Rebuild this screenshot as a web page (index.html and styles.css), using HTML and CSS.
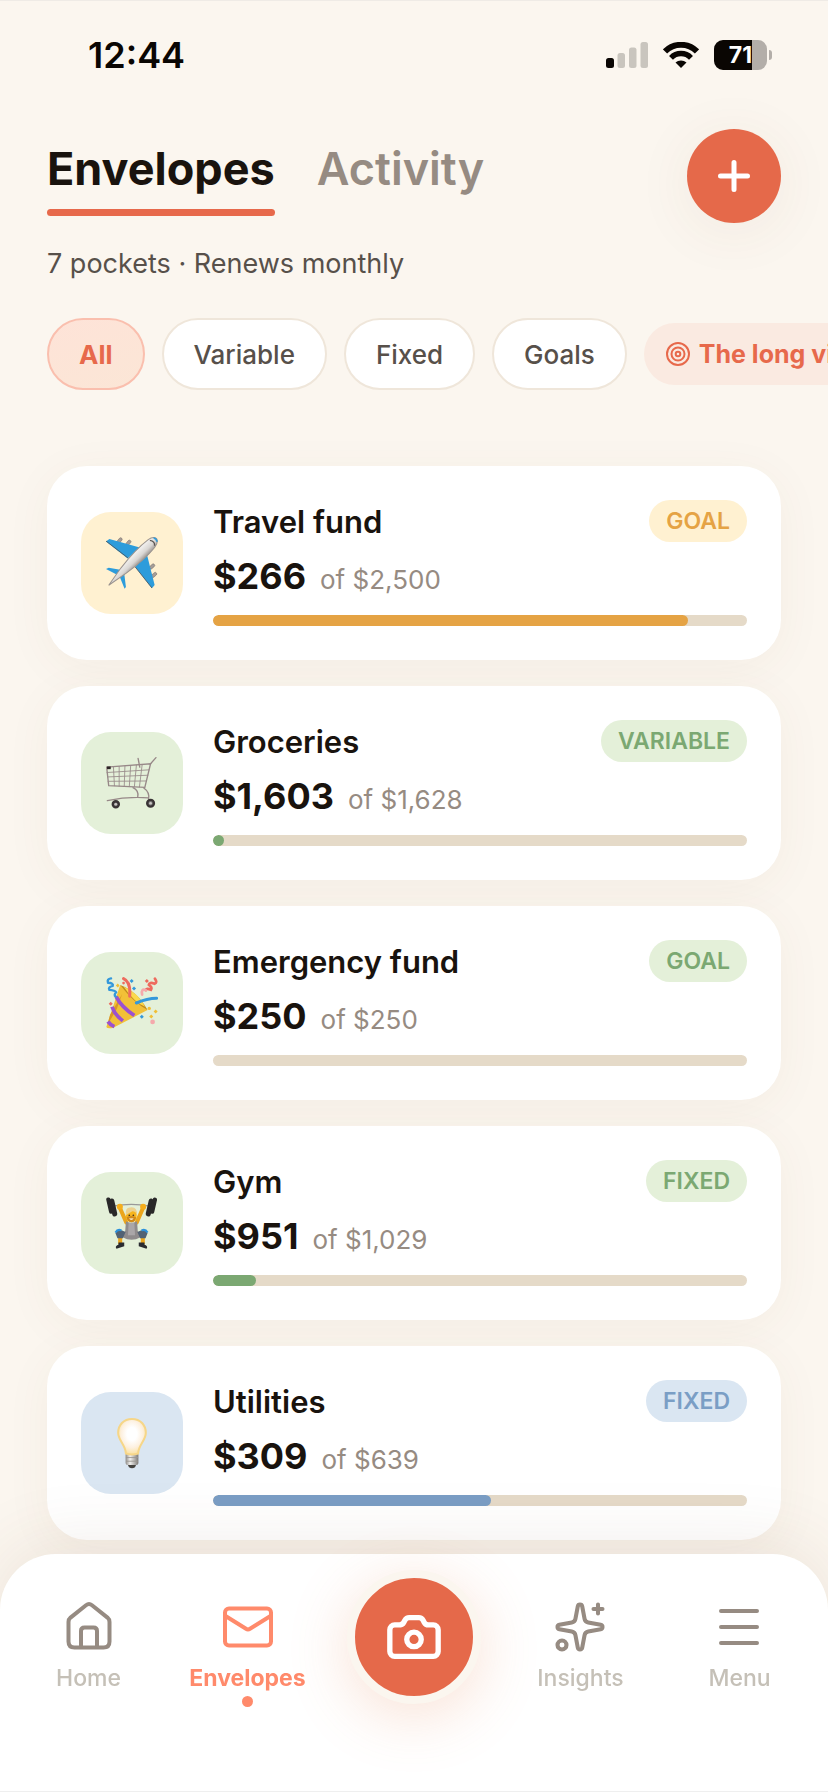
FILE: index.html
```
<!DOCTYPE html>
<html lang="en">
<head>
  <meta charset="UTF-8" />
  <meta name="viewport" content="width=device-width, initial-scale=1.0" />
  <title>Envelopes</title>
  <link rel="stylesheet" href="styles.css">
</head>
<body>
  <div class="status-bar">
    <span class="time">12:44</span>
    <div class="status-icons">
      <svg class="signal" viewBox="0 0 42 26" aria-hidden="true">
        <rect x="0" y="16" width="8" height="10" rx="2.5" fill="#0a0603"/>
        <rect x="11.500" y="11" width="7.500" height="15" rx="2.500" fill="#c9c5be"/>
        <rect x="23" y="5.500" width="7.500" height="20.500" rx="2.500" fill="#c9c5be"/>
        <rect x="34.500" y="0" width="7.500" height="26" rx="2.500" fill="#c9c5be"/>
      </svg>
      <svg class="wifi" viewBox="0 0 36 26" aria-hidden="true">
        <path d="M2 9.500 A22.500 22.500 0 0 1 34 9.500" fill="none" stroke="#0a0603" stroke-width="6"/>
        <path d="M8 15.800 A14 14 0 0 1 28 15.800" fill="none" stroke="#0a0603" stroke-width="5.500"/>
        <path d="M18 26 L12.500 20.600 A8 8 0 0 1 23.500 20.600 Z" fill="#0a0603"/>
      </svg>
      <span class="battery">71</span>
    </div>
  </div>

  <main class="page">
    <header class="top">
      <div class="tabs">
        <button class="tab active">Envelopes</button>
        <button class="tab">Activity</button>
      </div>
      <button class="add-btn" aria-label="Add envelope">
        <svg viewBox="0 0 32 32" aria-hidden="true"><path d="M16 2.500v27M2.500 16h27"/></svg>
      </button>
    </header>

    <p class="subtitle">7 pockets · Renews monthly</p>

    <div class="filters">
      <button class="chip selected">All</button>
      <button class="chip">Variable</button>
      <button class="chip">Fixed</button>
      <button class="chip">Goals</button>
      <button class="chip-link">
        <svg viewBox="0 0 24 24" aria-hidden="true">
          <circle cx="12" cy="12" r="11"/><circle cx="12" cy="12" r="6.500"/><circle cx="12" cy="12" r="2.300"/>
        </svg>
        The long view
      </button>
    </div>

    <section class="cards">
      <article class="card gold">
        <div class="tile">
          <svg viewBox="0 0 154 154" aria-hidden="true">
            <defs>
              <linearGradient id="hull" x1="0.300" y1="0.300" x2="0.700" y2="0.700">
                <stop offset="0.300" stop-color="#f4f3f1"/><stop offset="0.550" stop-color="#d9d6d3"/><stop offset="0.750" stop-color="#8f8884"/>
              </linearGradient>
            </defs>
            <g fill="#a59d98" stroke="#6f6864" stroke-width="1.500">
              <rect x="36" y="1" width="9" height="18" rx="4" transform="rotate(40 40 10)"/>
              <rect x="62" y="8" width="9" height="18" rx="4" transform="rotate(40 66 17)"/>
              <rect x="132" y="78" width="9" height="18" rx="4" transform="rotate(48 136 87)"/>
              <rect x="138" y="103" width="9" height="18" rx="4" transform="rotate(48 142 112)"/>
            </g>
            <path d="M0 13 10 6 100 31 64 64Z" fill="#2d9cdb"/>
            <path d="M0 12 65 62" stroke="#4b565e" stroke-width="2.500"/>
            <path d="M122 55 144 142 136 152 86 88Z" fill="#2d9cdb"/>
            <path d="M86 88 136 151" stroke="#4b565e" stroke-width="2.500"/>
            <path d="M0 95 8 91 42 97 33 112ZM40 116 54 108 59 148 55 153Z" fill="#2d9cdb"/>
            <path d="M8 143 44 92Q88 36 125 8 140-3 150 5 156 16 144 31 116 66 60 107Z" fill="url(#hull)" stroke="#9a938f" stroke-width="3"/>
            <path d="M130 10Q145 12 144 26" fill="none" stroke="#5c5653" stroke-width="4"/>
            <path d="M141 3Q150 5 151 14" fill="none" stroke="#2d9cdb" stroke-width="5"/>
          </svg>
        </div>
        <div class="info">
          <div class="row"><h2>Travel fund</h2><span class="badge">GOAL</span></div>
          <p class="amount"><strong>$266</strong> <span>of $2,500</span></p>
          <div class="bar"><div class="fill" style="width: 89%"></div></div>
        </div>
      </article>

      <article class="card green">
        <div class="tile">
          <svg viewBox="0 0 154 154" fill="none" stroke="#978888" stroke-width="3" stroke-linecap="round" aria-hidden="true">
            <path d="M2 30 132 20 115 90 8 85Z" stroke-width="4"/>
            <path d="M3 46 127 38M5 59 124 54M6 72 119 71" stroke-width="2.500"/>
            <path d="M22 29 25 85M39 28 39 86M56 27 54 87M73 26 69 88M90 24 84 89M107 23 99 89" stroke-width="2.500"/>
            <path d="M132 20 148 2M95 4 100 30" stroke-width="4"/>
            <path d="M80 91Q98 100 94 118M112 92Q130 105 126 124M4 129Q65 116 126 121" stroke-width="4"/>
            <path d="M3 32H14" stroke="#2b2525" stroke-width="8" stroke-linecap="butt"/>
            <g fill="#777" stroke="#393335" stroke-width="7"><circle cx="29" cy="140" r="9"/><circle cx="132" cy="137" r="10"/></g>
            <g fill="#cbc5c5" stroke="none"><circle cx="29" cy="140" r="4"/><circle cx="132" cy="137" r="4"/></g>
          </svg>
        </div>
        <div class="info">
          <div class="row"><h2>Groceries</h2><span class="badge">VARIABLE</span></div>
          <p class="amount"><strong>$1,603</strong> <span>of $1,628</span></p>
          <div class="bar"><div class="fill" style="width: 2%"></div></div>
        </div>
      </article>

      <article class="card green">
        <div class="tile">
          <svg viewBox="0 0 154 154" aria-hidden="true">
            <path d="M1 148Q3 154 20 151L123 98Q90 60 42 24Z" fill="#f2c037"/>
            <path d="M42 24Q92 42 123 98 82 76 42 24Z" fill="#c08a1e"/>
            <path d="M52 28Q94 46 116 88 84 76 52 28Z" fill="#fbd94b"/>
            <path d="M12 112 4 142 32 95 48 50Z" fill="#d99726"/>
            <g fill="none" stroke="#9b51d0" stroke-width="11">
              <path d="M30 58Q45 88 84 114M18 88Q24 110 50 130M6 132Q12 142 25 147"/>
            </g>
            <g fill="none" stroke-linecap="round">
              <path d="M15 4Q2 6 6 17 23 18 20 26 5 30 10 38 29 40 30 45 22 54 29 58" stroke="#3498db" stroke-width="7"/>
              <path d="M90 77Q122 63 150 63" stroke="#3498db" stroke-width="9"/>
              <path d="M52 5Q74 15 70 57" stroke="#ee6b5e" stroke-width="9"/>
              <path d="M145 5Q153 17 144 20 128 14 127 23 138 30 133 38 119 32 118 39" stroke="#ee6b5e" stroke-width="8"/>
              <path d="M118 39Q103 33 107 52" stroke="#f5a9ac" stroke-width="8"/>
            </g>
            <g fill="#f1bf35"><path d="m35 19 5 6-5 6-6-6ZM147 96l6 6-6 6-6-6ZM134 111l6 6-6 6-6-6Z"/><circle cx="128" cy="93" r="5"/></g>
            <g fill="#3498db"><path d="m76 6 6 6-6 6-6-6ZM83 28l6 6-6 6-6-6ZM106 112l6 6-6 6-6-6Z"/></g>
            <g fill="#ee6b5e"><path d="m121 6 6 6-6 6-6-6ZM14 73l6 6-6 6-6-6Z"/><circle cx="52" cy="18" r="4"/></g>
            <circle cx="138" cy="133" r="7" fill="#f5a9ac"/>
          </svg>
        </div>
        <div class="info">
          <div class="row"><h2>Emergency fund</h2><span class="badge">GOAL</span></div>
          <p class="amount"><strong>$250</strong> <span>of $250</span></p>
          <div class="bar"></div>
        </div>
      </article>

      <article class="card green">
        <div class="tile">
          <svg viewBox="0 0 154 154" aria-hidden="true">
            <path d="M20 27Q75 17 130 27" fill="none" stroke="#999" stroke-width="4"/>
            <g fill="#292829">
              <rect x="5" y="1" width="13" height="49" rx="6" transform="rotate(-13 11 26)"/>
              <rect x="14" y="4" width="15" height="54" rx="7" transform="rotate(-13 22 31)"/>
              <rect x="122" y="4" width="15" height="54" rx="7" transform="rotate(13 129 31)"/>
              <rect x="134" y="1" width="13" height="49" rx="6" transform="rotate(13 140 26)"/>
            </g>
            <g stroke="#eba51d" stroke-width="12" stroke-linecap="round" fill="none">
              <path d="M41 32 60 75M110 32 91 75"/>
            </g>
            <circle cx="41" cy="29" r="9" fill="#f5ae1c"/><circle cx="110" cy="29" r="9" fill="#f5ae1c"/>
            <path d="M59 72Q75 81 92 72L94 101 102 119Q76 134 49 119L57 100Z" fill="#8f8b8c"/>
            <path d="M67 77H84L86 113H65Z" fill="#aaa6a8"/>
            <path d="M59 52Q58 73 75 75 92 73 91 52 90 34 75 34 60 34 59 52Z" fill="#f6b51d"/>
            <path d="M59 54Q56 30 72 31 93 28 92 54 89 42 78 42 67 48 59 54Z" fill="#ecd18f"/>
            <path d="M61 60Q75 53 89 60 87 75 75 75 63 73 61 60Z" fill="#d18a1a"/>
            <path d="M68 64H82Q75 71 68 64Z" fill="#fff"/>
            <g fill="#493526"><circle cx="69" cy="54" r="2.500"/><circle cx="81" cy="54" r="2.500"/></g>
            <g stroke="#eba51d" stroke-width="12"><path d="M42 107V139M109 107V139"/></g>
            <path d="M28 107Q31 95 48 99L58 104 50 122H34ZM123 107Q120 95 103 99L93 104 101 122H117Z" fill="#526274"/>
            <path d="M28 105Q34 94 46 99M123 105Q117 94 105 99" fill="none" stroke="#2c91dc" stroke-width="6"/>
            <path d="M37 135H54V146L31 153Q25 147 37 141ZM114 135H97V146L120 153Q126 147 114 141Z" fill="#292b30"/>
          </svg>
        </div>
        <div class="info">
          <div class="row"><h2>Gym</h2><span class="badge">FIXED</span></div>
          <p class="amount"><strong>$951</strong> <span>of $1,029</span></p>
          <div class="bar"><div class="fill" style="width: 8%"></div></div>
        </div>
      </article>

      <article class="card blue">
        <div class="tile">
          <svg viewBox="0 0 154 154" aria-hidden="true">
            <defs>
              <radialGradient id="glow" cx="0.500" cy="0.420" r="0.600">
                <stop offset="0.300" stop-color="#fff"/><stop offset="0.650" stop-color="#fdf0df"/><stop offset="1" stop-color="#fae099"/>
              </radialGradient>
              <linearGradient id="metal">
                <stop offset="0" stop-color="#8d8a87"/><stop offset="0.350" stop-color="#f1f0ee"/><stop offset="1" stop-color="#7e7b77"/>
              </linearGradient>
            </defs>
            <path d="M63 138H91L86 149Q77 155 68 149Z" fill="#464440"/>
            <rect x="58" y="106" width="38" height="36" rx="6" fill="url(#metal)"/>
            <path d="M59 120H95M60 131H94" stroke="#9a9690" stroke-width="2.500"/>
            <path d="M77 6C52 6 36 24 36 47 36 70 57 81 59 108Q77 114 95 108C97 81 118 70 118 47 118 24 102 6 77 6Z" fill="url(#glow)" stroke="#f6d688" stroke-width="6"/>
          </svg>
        </div>
        <div class="info">
          <div class="row"><h2>Utilities</h2><span class="badge">FIXED</span></div>
          <p class="amount"><strong>$309</strong> <span>of $639</span></p>
          <div class="bar"><div class="fill" style="width: 52%"></div></div>
        </div>
      </article>
    </section>
  </main>

  <nav class="bottom-nav">
    <a href="#home">
      <svg viewBox="0 0 54 54" aria-hidden="true">
        <path d="M24 5.200Q27 2.800 30 5.200L45.500 17.600Q47.500 19.300 47.500 22V41.500Q47.500 47.500 41.500 47.500H12.500Q6.500 47.500 6.500 41.500V22Q6.500 19.300 8.500 17.600Z"/>
        <path d="M19 47V31Q19 27.500 22.500 27.500H31.500Q35 27.500 35 31V47"/>
      </svg>
      <span>Home</span>
    </a>
    <a href="#envelopes" class="current">
      <svg viewBox="0 0 54 54" aria-hidden="true">
        <rect x="4" y="8.500" width="46" height="37" rx="4"/>
        <path d="M4.500 16 25 28.800Q27 30 29 28.800L49.500 16"/>
      </svg>
      <span>Envelopes</span>
    </a>
    <button class="camera-btn" aria-label="Scan receipt">
      <svg viewBox="0 0 24 24" aria-hidden="true">
        <path d="M14 4a2 2 0 0 1 1.760 1.050l.480.900A2 2 0 0 0 18 7h2a2 2 0 0 1 2 2v9a2 2 0 0 1-2 2H4a2 2 0 0 1-2-2V9a2 2 0 0 1 2-2h2a2 2 0 0 0 1.760-1.050l.480-.900A2 2 0 0 1 10 4z"/>
        <circle cx="12" cy="13" r="3"/>
      </svg>
    </button>
    <a href="#insights">
      <svg class="sparkles" viewBox="0 0 24 24" aria-hidden="true">
        <path d="M11.017 2.814a1 1 0 0 1 1.966 0l1.051 5.558a2 2 0 0 0 1.594 1.594l5.558 1.051a1 1 0 0 1 0 1.966l-5.558 1.051a2 2 0 0 0-1.594 1.594l-1.051 5.558a1 1 0 0 1-1.966 0l-1.051-5.558a2 2 0 0 0-1.594-1.594l-5.558-1.051a1 1 0 0 1 0-1.966l5.558-1.051a2 2 0 0 0 1.594-1.594z"/>
        <path d="M20 2v4M22 4h-4"/>
        <circle cx="4" cy="20" r="2"/>
      </svg>
      <span>Insights</span>
    </a>
    <a href="#menu">
      <svg viewBox="0 0 54 54" aria-hidden="true"><path d="M9 11H45M9 27H45M9 43H45"/></svg>
      <span>Menu</span>
    </a>
  </nav>
</body>
</html>
```

FILE: styles.css
```
* {
  box-sizing: border-box;
}

body {
  margin: 0;
  min-height: 100vh;
  background: #fbf6ef;
  border-top: 1px solid #efebe6;
  font-family: Inter, "Liberation Sans", sans-serif;
  color: #19130e;
  overflow-x: hidden;
}

button {
  border: none;
  background: none;
  padding: 0;
  font-family: inherit;
  cursor: pointer;
}

h2, p {
  margin: 0;
}

/* status bar */
.status-bar {
  display: flex;
  justify-content: space-between;
  align-items: center;
  height: 108px;
  padding: 0 61px 0 88px;
}

.time {
  font-size: 36px;
  font-weight: 600;
  color: #0a0603;
}

.status-icons {
  display: flex;
  align-items: center;
  gap: 15px;
}

.signal {
  width: 42px;
  height: 26px;
}

.wifi {
  width: 36px;
  height: 26px;
}

.battery {
  position: relative;
  width: 53px;
  height: 30px;
  border-radius: 9px;
  background: linear-gradient(to right, #0a0603 71%, #b3aea9 71%);
  color: #fff;
  font-size: 23px;
  font-weight: 700;
  line-height: 30px;
  text-align: center;
}

.battery::after {
  content: "";
  position: absolute;
  right: -5px;
  top: 10px;
  width: 3px;
  height: 10px;
  border-radius: 0 4px 4px 0;
  background: #b3aea9;
}

/* header */
.page {
  padding: 20px 47px 240px;
}

.top {
  display: flex;
  justify-content: space-between;
  align-items: flex-start;
}

.tabs {
  display: flex;
  gap: 42px;
  padding-top: 12px;
}

.tab {
  padding-bottom: 12px;
  border-bottom: 7px solid transparent;
  font-size: 45px;
  font-weight: 600;
  line-height: 56px;
  color: #968b82;
}

.tab.active {
  position: relative;
  font-weight: 700;
  color: #19130e;
}

.tab.active::after {
  content: "";
  position: absolute;
  left: 0;
  right: 0;
  bottom: -7px;
  height: 7px;
  border-radius: 4px;
  background: #e7694b;
}

.add-btn {
  display: flex;
  justify-content: center;
  align-items: center;
  width: 94px;
  height: 94px;
  border-radius: 50%;
  background: #e5694a;
  box-shadow: 0 8px 60px rgba(120, 70, 40, 0.07);
}

.add-btn svg {
  width: 32px;
  height: 32px;
  stroke: #fff;
  stroke-width: 5;
  stroke-linecap: round;
}

.subtitle {
  margin-top: 24px;
  font-size: 27px;
  line-height: 34px;
  color: #57504a;
}

/* filters */
.filters {
  display: flex;
  align-items: center;
  gap: 17px;
  margin: 37px -47px 0 0;
  overflow: hidden;
}

.chip, .chip-link {
  flex-shrink: 0;
  font-size: 26px;
  white-space: nowrap;
}

.chip {
  height: 72px;
  padding: 0 30px;
  border: 2px solid #efe6da;
  border-radius: 36px;
  background: #fff;
  font-weight: 500;
  color: #57504a;
}

.chip.selected {
  border-color: #fabfae;
  background: linear-gradient(160deg, #fee3d8, #fbe6d6);
  font-weight: 700;
  color: #e7694b;
}

.chip-link {
  display: flex;
  align-items: center;
  gap: 9px;
  height: 62px;
  padding: 0 22px;
  border-radius: 31px;
  background: #faeae1;
  font-size: 25px;
  font-weight: 700;
  color: #e7694b;
}

.chip-link svg {
  width: 24px;
  height: 24px;
  fill: none;
  stroke: #e7694b;
  stroke-width: 2;
}

/* cards */
.cards {
  display: flex;
  flex-direction: column;
  gap: 26px;
  margin-top: 76px;
}

.card {
  display: flex;
  align-items: center;
  gap: 30px;
  padding: 34px;
  border-radius: 40px;
  background: #fff;
  box-shadow: 0 8px 48px rgba(120, 70, 40, 0.05);
}

.tile {
  display: flex;
  flex-shrink: 0;
  justify-content: center;
  align-items: center;
  width: 102px;
  height: 102px;
  border-radius: 30px;
}

.tile svg {
  width: 52px;
  height: 52px;
}

.info {
  flex: 1;
}

.row {
  display: flex;
  justify-content: space-between;
  align-items: center;
  height: 42px;
}

.row h2 {
  font-size: 31px;
  font-weight: 600;
}

.badge {
  padding: 0 17px;
  border-radius: 21px;
  font-size: 23px;
  font-weight: 600;
  line-height: 42px;
}

.amount {
  display: flex;
  align-items: baseline;
  gap: 14px;
  margin: 10px 0 11px;
  line-height: 48px;
}

.amount strong {
  font-size: 36px;
  font-weight: 700;
}

.amount span {
  font-size: 26px;
  color: #968b82;
}

.bar {
  height: 11px;
  border-radius: 6px;
  background: #e5dac8;
  overflow: hidden;
}

.fill {
  height: 100%;
  border-radius: 6px;
}

.gold .tile, .gold .badge {
  background: #fff1d1;
}

.gold .badge {
  color: #e5a344;
}

.gold .fill {
  background: #e5a344;
}

.green .tile, .green .badge {
  background: #e4f0d9;
}

.green .badge {
  color: #7ba872;
}

.green .fill {
  background: #7ba872;
}

.blue .tile, .blue .badge {
  background: #dae6f2;
}

.blue .badge {
  color: #7a9ec5;
}

.blue .fill {
  background: #7a9ec5;
}

/* bottom navigation */
.bottom-nav {
  position: fixed;
  left: 0;
  right: 0;
  bottom: 0;
  display: grid;
  grid-template-columns: 1fr 1fr 174px 1fr 1fr;
  justify-items: center;
  align-items: start;
  padding: 16px 9px 84px;
  border-radius: 56px 56px 0 0;
  border-bottom: 1px solid #efefef;
  background: #fff;
  box-shadow: 0 -8px 72px rgba(110, 70, 40, 0.1);
}

.bottom-nav a {
  display: flex;
  flex-direction: column;
  align-items: center;
  padding-top: 30px;
  font-size: 23px;
  font-weight: 500;
  line-height: 28px;
  color: #c5c0b7;
  text-decoration: none;
}

.bottom-nav a svg {
  width: 54px;
  height: 54px;
  margin-bottom: 10px;
  fill: none;
  stroke: #968b82;
  stroke-width: 4;
  stroke-linecap: round;
  stroke-linejoin: round;
}

.bottom-nav a .sparkles {
  stroke-width: 1.8;
}

.bottom-nav .current {
  font-weight: 700;
  color: #ff8a6b;
}

.bottom-nav .current svg {
  stroke: #ff8a6b;
}

.bottom-nav .current::after {
  content: "";
  width: 11px;
  height: 11px;
  margin-top: 4px;
  border-radius: 50%;
  background: #ff8a6b;
}

.camera-btn {
  display: flex;
  justify-content: center;
  align-items: center;
  width: 134px;
  height: 134px;
  border: 8px solid #fbf6ef;
  border-radius: 50%;
  background: #e5694a;
  box-shadow: 0 12px 60px rgba(231, 130, 80, 0.24);
}

.camera-btn svg {
  width: 58px;
  height: 58px;
  fill: none;
  stroke: #fff;
  stroke-width: 2.2;
  stroke-linecap: round;
  stroke-linejoin: round;
}
```
